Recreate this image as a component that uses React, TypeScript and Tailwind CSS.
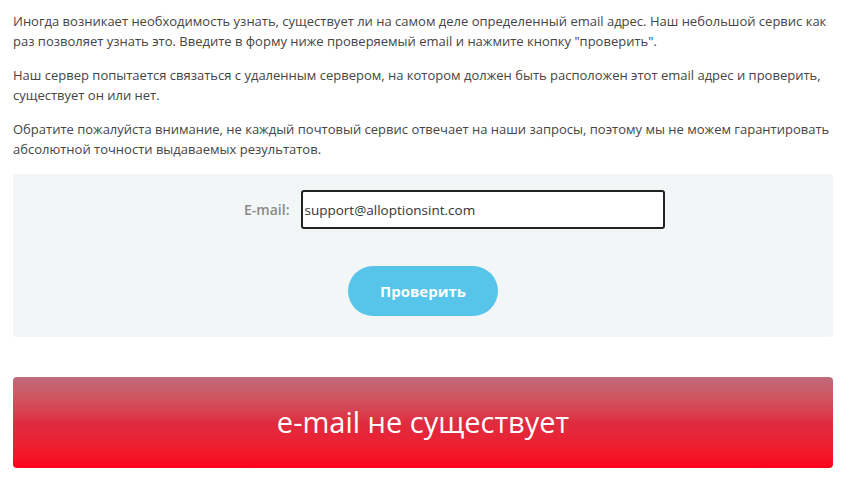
import React from "react";

export default function App() {
  return (
    <div className="w-[850px] h-[500px] bg-white px-[13px] pt-[11px] text-[#454545] font-['Open_Sans',sans-serif] text-[13px] leading-[20px] overflow-hidden">
      <p className="mb-[14px]">
        Иногда возникает необходимость узнать, существует ли на самом деле определенный email адрес. Наш небольшой сервис как раз позволяет узнать это. Введите в форму ниже проверяемый email и нажмите кнопку "проверить".
      </p>
      <p className="mb-[14px]">
        Наш сервер попытается связаться с удаленным сервером, на котором должен быть расположен этот email адрес и проверить, существует он или нет.
      </p>
      <p className="mb-[15px]">
        Обратите пожалуйста внимание, не каждый почтовый сервис отвечает на наши запросы, поэтому мы не можем гарантировать абсолютной точности выдаваемых результатов.
      </p>
      <div className="w-[820px] h-[163px] bg-[#f3f6f7] rounded-[3px] pt-[16px] flex flex-col items-center">
        <div className="flex items-center gap-[11px] ml-[42px]">
          <label className="text-[#8a8a8a] font-semibold text-[14px] w-[66px] text-right">E-mail:</label>
          <input
            defaultValue="support@alloptionsint.com"
            className="w-[364px] h-[39px] bg-white border-2 border-[#222] rounded-[3px] px-[2px] text-[13.5px] text-[#333] outline-none"
          />
        </div>
        <button className="mt-[37px] w-[150px] h-[50px] rounded-full bg-[#57c4ea] text-white font-bold text-[15px]">
          Проверить
        </button>
      </div>
      <div className="mt-[40px] w-[820px] h-[91px] rounded-[4px] bg-gradient-to-b from-[#bf6a79] via-[#df2b40] to-[#fc0018] flex items-center justify-center">
        <span className="text-white text-[29px] pb-[2px]">e-mail не существует</span>
      </div>
    </div>
  );
}
